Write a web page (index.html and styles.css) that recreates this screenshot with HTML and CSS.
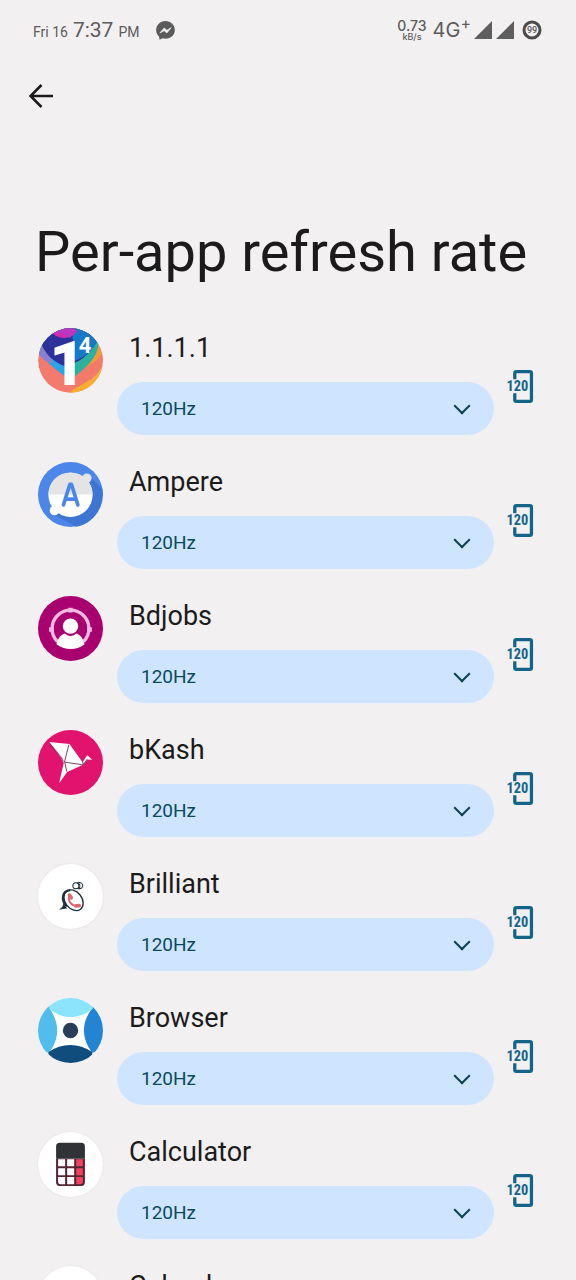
FILE: index.html
```html
<!DOCTYPE html>
<html lang="en">
<head>
<meta charset="utf-8">
<meta name="viewport" content="width=device-width, initial-scale=1">
<title>Per-app refresh rate</title>
<link rel="stylesheet" href="styles.css">
</head>
<body>
<svg class="sprite" aria-hidden="true">
  <symbol id="rate" viewBox="231 56 81 101">
    <path d="M254 84V66q0-5 5-5h41q5 0 5 5v81q0 5-5 5h-41q-5 0-5-5v-20" fill="none" stroke="currentColor" stroke-width="10"/>
    <text class="rate-text" x="229" y="121">120</text>
  </symbol>
</svg>
<header class="status">
  <div class="status-group">
    <span class="small">Fri 16</span><span class="clock">7:37</span><span class="small">PM</span>
    <svg class="messenger" viewBox="467 62 56 57" aria-hidden="true"><path d="M495 62c-16 0-28 12-28 27 0 8 3 15 9 20l1 9 9-4c3 1 6 1 9 1 16 0 28-11 28-26s-12-27-28-27z" fill="#5c5b5c"/><path d="M478 98l13-15 8 7 13-8-13 16-8-7z" fill="#f2f0f1" stroke="#f2f0f1" stroke-width="2"/></svg>
  </div>
  <div class="status-group">
    <span class="speed"><b>0.73</b><span>kB/s</span></span><span class="network">4G<sup>+</sup></span>
    <svg class="signal" viewBox="0 0 40 18" aria-hidden="true"><path d="M18 0v18H0zM40 0v18H22z" fill="#5f5e5f"/></svg>
    <svg class="battery" viewBox="0 0 20 20" role="img" aria-label="Battery 99"><circle cx="10" cy="10" r="8" fill="none" stroke="#4c4b4c" stroke-width="3"/><text class="battery-text" x="10" y="13">99</text></svg>
  </div>
</header>
<nav class="toolbar">
  <button class="back" type="button" aria-label="Back"><svg viewBox="0 0 24 24"><path d="M12.500 1 1.500 12l11 11M2 12h22" fill="none" stroke="currentColor" stroke-width="2.600"/></svg></button>
</nav>
<main>
  <h1>Per-app refresh rate</h1>
  <ul class="apps">
    <li class="app">
      <svg class="app-icon" viewBox="54 51 195 195" aria-hidden="true">
        <clipPath id="c1"><circle cx="151.500" cy="148.500" r="97"/></clipPath>
        <g clip-path="url(#c1)">
          <path d="M54 51h195v195H54z" fill="#f47a70"/>
          <path d="M145 250c20-30 85-34 105-95v95z" fill="#f9ae2e"/>
          <path d="M249 145c-15 25-35 45-69 67l-20 10 5-20 84-72z" fill="#f27a68"/>
          <path d="M200 51h50v65c-8 25-30 40-55 55z" fill="#fb9837"/>
          <path d="M54 125c25 25 45 45 98 82 38-32 80-60 83-107l-30-49H54z" fill="#2bb29e"/>
          <path d="M54 125c25 25 45 45 98 82l12-10V51H54z" fill="#28a5e8"/>
          <path d="M54 125c14 25 30 29 45 31L68 90z" fill="#8b80d0"/>
          <path d="M66 104c15 30 35 48 65 60 45-4 80-34 99-73L200 51H80z" fill="#2d319b"/>
          <path d="M155 51h55l23 40c-18 30-35 45-68 58z" fill="#1578c8"/>
          <path d="M94 60c10 25 60 30 77 0l-18-14z" fill="#d12cb4"/>
          <path d="M94 60c25 0 40 14 58 20l5-29h-50z" fill="#b63ac1"/>
        </g>
        <text class="one" x="142" y="222">1</text><text class="four" x="195" y="127">4</text>
      </svg>
      <div class="app-body"><label class="app-name" for="a1">1.1.1.1</label><span class="picker"><select id="a1"><option>120Hz</option><option>90Hz</option><option>60Hz</option></select></span></div>
      <svg class="rate"><use href="#rate"/></svg>
    </li>
    <li class="app">
      <svg class="app-icon" viewBox="54 35 194 194" aria-hidden="true">
        <circle cx="151" cy="132" r="97" fill="#4b86e8"/>
        <path d="M213 82l33 34c5 50-25 104-78 112l-66-36z" fill="#3e74d2"/>
        <circle cx="151" cy="133" r="66" fill="#fff"/><circle cx="200" cy="83" r="14" fill="#e4e4e4"/><circle cx="103" cy="180" r="14" fill="#fff"/>
        <path d="M85 132a66 66 0 0 1 132 0z" fill="#e4e4e4"/>
        <path d="M130 163l19-61h5l19 61M137 146h29" fill="none" stroke="#4b86e8" stroke-width="11" stroke-linecap="round" stroke-linejoin="round"/>
      </svg>
      <div class="app-body"><label class="app-name" for="a2">Ampere</label><span class="picker"><select id="a2"><option>120Hz</option><option>90Hz</option><option>60Hz</option></select></span></div>
      <svg class="rate"><use href="#rate"/></svg>
    </li>
    <li class="app">
      <svg class="app-icon" viewBox="54 34 194 194" aria-hidden="true">
        <circle cx="151" cy="131" r="97" fill="#a90070"/>
        <path d="M112 170a55 55 0 1 1 78 0" fill="none" stroke="#f6b9e1" stroke-width="10"/><path d="M151 69v14M87 134h14M201 134h14" stroke="#f6b9e1" stroke-width="13"/>
        <circle cx="151" cy="124" r="23" fill="#fff"/><path d="M109 178c5-20 14-28 25-32 12 10 22 10 34 0 13 4 20 14 25 32-20 19-62 19-84 0z" fill="#fff"/>
      </svg>
      <div class="app-body"><label class="app-name" for="a3">Bdjobs</label><span class="picker"><select id="a3"><option>120Hz</option><option>90Hz</option><option>60Hz</option></select></span></div>
      <svg class="rate"><use href="#rate"/></svg>
    </li>
    <li class="app">
      <svg class="app-icon" viewBox="54 32 194 194" aria-hidden="true">
        <circle cx="151" cy="129" r="97" fill="#e2136e"/>
        <path d="M88 68l60 6 39 54 14-21 15 14-14-1-13 16-48 21-24 34 14-62z" fill="#fff"/>
        <path d="M92 75l38 50M146 76l-13 52 56 8M134 129l6 27M187 127l2 8 12-16" fill="none" stroke="#5e2244" stroke-width="2.500"/><path d="M96 80l32 38" stroke="#e2136e" stroke-width="2"/>
      </svg>
      <div class="app-body"><label class="app-name" for="a4">bKash</label><span class="picker"><select id="a4"><option>120Hz</option><option>90Hz</option><option>60Hz</option></select></span></div>
      <svg class="rate"><use href="#rate"/></svg>
    </li>
    <li class="app">
      <svg class="app-icon light" viewBox="54 30 194 194" aria-hidden="true">
        <g fill="none" stroke="#1c2f3b"><ellipse cx="160" cy="138" rx="25" ry="34" stroke-width="4" transform="rotate(-38 160 138)"/><path d="M150 108c-25 2-28 30-10 49" stroke-width="7"/><circle cx="167" cy="95" r="9" stroke-width="3"/><path d="M173 86c18-5 20 20 2 18 6-5 6-12-2-18z" stroke-width="3"/></g>
        <path d="M130 145c2 8 6 13 12 18-8-1-17 3-25 3 8-5 13-10 13-21z" fill="#1c2f3b"/>
        <path d="M147 127c-5 15 10 31 27 28" fill="none" stroke="#df6870" stroke-width="6"/><path d="M148 123l5 8M167 155l10-1" stroke="#df6870" stroke-width="11" stroke-linecap="round"/>
      </svg>
      <div class="app-body"><label class="app-name" for="a5">Brilliant</label><span class="picker"><select id="a5"><option>120Hz</option><option>90Hz</option><option>60Hz</option></select></span></div>
      <svg class="rate"><use href="#rate"/></svg>
    </li>
    <li class="app">
      <svg class="app-icon" viewBox="54 34 194 194" aria-hidden="true">
        <clipPath id="c6"><circle cx="151" cy="131" r="97"/></clipPath>
        <g clip-path="url(#c6)"><path d="M54 34h194v194H54z" fill="#fff"/>
        <path d="M54 30h35v35c30 45 30 90-2 132H54z" fill="#51bdec"/><path d="M248 30h-33v35c-32 44-32 88 0 132h33z" fill="#2484d4"/>
        <path d="M87 65c38 34 88 34 131 0V30H87z" fill="#8be4fb"/><path d="M85 195c40-28 90-28 131 0v35H85z" fill="#104d7c"/></g>
        <circle cx="151" cy="131" r="23" fill="#293f59"/>
      </svg>
      <div class="app-body"><label class="app-name" for="a6">Browser</label><span class="picker"><select id="a6"><option>120Hz</option><option>90Hz</option><option>60Hz</option></select></span></div>
      <svg class="rate"><use href="#rate"/></svg>
    </li>
    <li class="app">
      <svg class="app-icon light" viewBox="54 34 194 194" aria-hidden="true">
        <path d="M108 114h86v70q0 11-11 11h-64q-11 0-11-11z" fill="#562330"/><path d="M108 114V77q0-11 11-11h64q11 0 11 11v37z" fill="#303235"/>
        <path d="M114 115h21v21h-21zM141 115h21v21h-21zM114 142h21v21h-21zM141 142h21v21h-21zM114 168h21v22h-14q-7 0-7-7zM141 168h21v22h-21z" fill="#fff"/>
        <path d="M168 115h20v21h-20zM168 142h20v21h-20zM168 168h20v15q0 7-7 7h-13z" fill="#f1415f"/>
      </svg>
      <div class="app-body"><label class="app-name" for="a7">Calculator</label><span class="picker"><select id="a7"><option>120Hz</option><option>90Hz</option><option>60Hz</option></select></span></div>
      <svg class="rate"><use href="#rate"/></svg>
    </li>
    <li class="app">
      <svg class="app-icon light" viewBox="0 0 65 65" aria-hidden="true"></svg>
      <div class="app-body"><label class="app-name" for="a8">Calendar</label><span class="picker"><select id="a8"><option>120Hz</option><option>90Hz</option><option>60Hz</option></select></span></div>
      <svg class="rate"><use href="#rate"/></svg>
    </li>
  </ul>
</main>
</body>
</html>
```
FILE: styles.css
```css
* { box-sizing: border-box; }
body {
  margin: 0;
  height: 100vh;
  display: flex;
  flex-direction: column;
  overflow: hidden;
  background: #f2f0f1;
  color: #1c1b1c;
  font-family: Roboto, "Noto Sans", sans-serif;
}
.sprite { display: none; }
.status {
  flex: none;
  display: flex;
  justify-content: space-between;
  align-items: center;
  height: 60px;
  padding: 0 34px 0 33px;
  color: #5c5b5c;
}
.status-group { display: flex; align-items: center; }
.status-group:first-child { align-items: baseline; gap: 5px; }
.small { font-size: 14px; line-height: 24px; }
.clock { font-size: 21px; line-height: 26px; }
.messenger { width: 19px; height: 19px; margin-left: 12px; align-self: center; }
.speed {
  display: flex;
  flex-direction: column;
  align-items: center;
  font: 14px/13px Inter, sans-serif;
}
.speed b { font-weight: 500; }
.speed span { font-size: 9px; line-height: 10px; font-weight: 500; }
.network { margin-left: 6px; font: 20px/24px Inter, sans-serif; }
.network sup { font-size: 16px; line-height: 0; }
.signal { width: 40px; height: 18px; margin-left: 3px; }
.battery { width: 20px; height: 20px; margin-left: 8px; }
.battery-text { font: 500 9px Roboto, sans-serif; text-anchor: middle; fill: #5c5b5c; }
.toolbar { flex: none; padding: 12px 24px 0; }
.back {
  display: flex;
  padding: 12px 5px;
  border: 0;
  background: none;
  color: #1c1b1c;
}
.back svg { width: 24px; height: 24px; }
main { flex: 1; min-height: 0; overflow-y: auto; scrollbar-width: none; }
h1 {
  margin: 0;
  padding: 100px 32px 0 35px;
  font-size: 56px;
  line-height: 64px;
  font-weight: 400;
}
.apps {
  display: grid;
  gap: 27px;
  margin: 0;
  padding: 44px 42px 24px 38px;
  list-style: none;
}
.app {
  display: grid;
  grid-template-columns: 65px 1fr 27px;
  align-items: start;
}
.app-icon { width: 65px; height: 65px; }
.light { border-radius: 50%; background: #fff; box-shadow: 0 0 2px #dcdadb; }
.app-body { display: flex; flex-direction: column; gap: 14px; padding: 0 13px 0 14px; }
.app-name { padding-left: 12px; font-size: 27px; line-height: 40px; }
.picker { display: flex; position: relative; }
.picker::after {
  content: "";
  position: absolute;
  right: 26px;
  top: 18px;
  width: 10px;
  height: 10px;
  border: solid #0b4057;
  border-width: 0 2px 2px 0;
  transform: rotate(45deg);
  pointer-events: none;
}
select {
  appearance: none;
  flex: 1;
  height: 53px;
  padding: 0 24px;
  border: 0;
  border-radius: 27px;
  background: #cfe5ff;
  color: #0b4a5e;
  font: 19px/24px Roboto, sans-serif;
}
.rate { width: 27px; height: 33px; margin-top: 42px; color: #146487; }
.rate-text { font: 700 44px "Liberation Sans Narrow", "Roboto Condensed", "DejaVu Sans Condensed", sans-serif; fill: currentColor; }
.one, .four { fill: #fff; text-anchor: middle; }
.one { font: 900 185px Roboto, sans-serif; }
.four { font: 700 66px Roboto, sans-serif; }
```
